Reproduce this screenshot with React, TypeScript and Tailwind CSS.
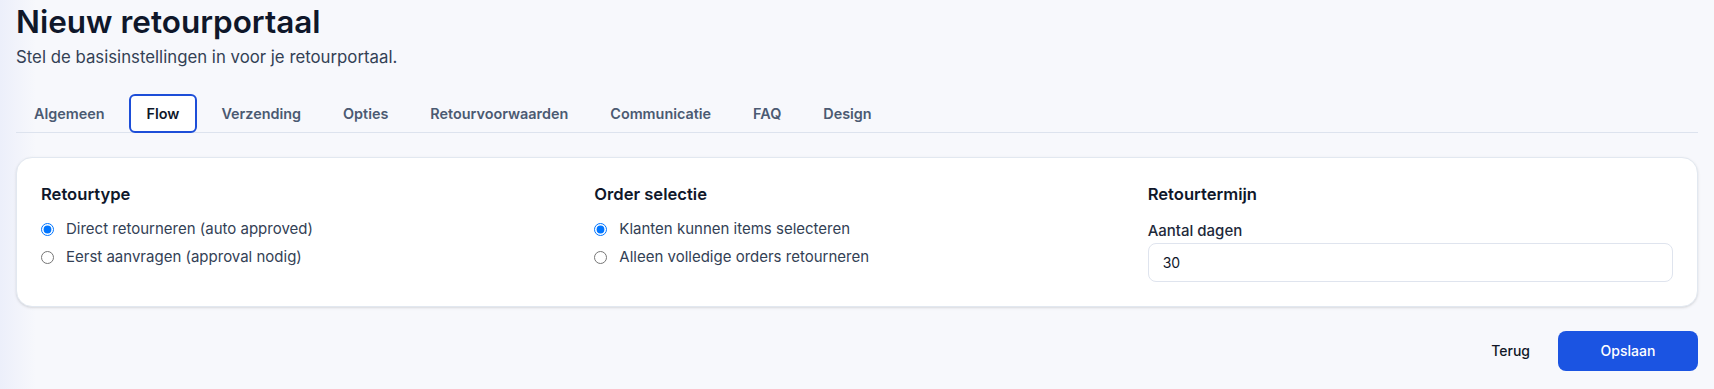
const tabs = ["Algemeen", "Flow", "Verzending", "Opties", "Retourvoorwaarden", "Communicatie", "FAQ", "Design"];

const Radio = ({ label, checked }: { label: string; checked?: boolean }) => {
  return (
    <label className="flex items-center gap-3 h-5 text-[15px] text-[#334155]">
      <input type="radio" readOnly checked={!!checked} className="m-0 w-[13px] h-[13px]" />
      <span>{label}</span>
    </label>
  );
};

const App = () => {
  return (
    <main
      className="min-h-[389px] px-4 pt-1 bg-[linear-gradient(90deg,#eceffa_0px,#f7f8fc_36px)]"
      style={{ fontFamily: "Inter, 'Noto Sans', sans-serif" }}
    >
      <h1 className="text-[31.5px] leading-9 font-semibold text-[#0f172a]">Nieuw retourportaal</h1>
      <p className="mt-[5px] text-[16.8px] leading-6 text-[#334155]">Stel de basisinstellingen in voor je retourportaal.</p>

      {/* tabs */}
      <nav className="mt-[25px] flex gap-1.5 border-b border-[#dde3ee]">
        {tabs.map((t) => (
          <button
            key={t}
            className={
              t === "Flow"
                ? "-mb-px h-[39px] px-4 rounded-md border-2 border-[#1d4ed8] bg-white text-[14.4px] font-semibold text-[#0f172a]"
                : "-mb-px h-[39px] px-4 rounded-md border-2 border-transparent text-[14.4px] font-semibold text-[#4b5a72]"
            }
          >
            {t}
          </button>
        ))}
      </nav>

      <section className="mt-6 bg-white border border-[#e2e8f0] rounded-2xl shadow-sm p-6 grid grid-cols-3 gap-7">
        <div>
          <h3 className="text-[16.6px] leading-6 font-semibold text-[#0f172a]">Retourtype</h3>
          <div className="mt-[13px] flex flex-col gap-2">
            <Radio label="Direct retourneren (auto approved)" checked />
            <Radio label="Eerst aanvragen (approval nodig)" />
          </div>
        </div>

        <div>
          <h3 className="text-[16.6px] leading-6 font-semibold text-[#0f172a]">Order selectie</h3>
          <div className="mt-[13px] flex flex-col gap-2">
            <Radio label="Klanten kunnen items selecteren" checked />
            <Radio label="Alleen volledige orders retourneren" />
          </div>
        </div>

        <div>
          <h3 className="text-[16.6px] leading-6 font-semibold text-[#0f172a]">Retourtermijn</h3>
          <label className="mt-[15px] block text-[15px] leading-5 font-medium text-[#1e293b]">Aantal dagen</label>
          <input
            readOnly
            value="30"
            className="mt-0.5 block w-full h-[39px] px-3.5 rounded-lg border border-[#dfe4ee] bg-white text-sm text-[#0f172a] outline-none"
          />
        </div>
      </section>

      <div className="mt-6 flex justify-end items-center gap-3">
        <button className="h-10 px-4 text-sm font-medium text-[#111827]">Terug</button>
        <button className="h-10 w-[140px] rounded-lg bg-[#1b54e2] text-sm font-medium text-white">Opslaan</button>
      </div>
    </main>
  );
};

export default App;
